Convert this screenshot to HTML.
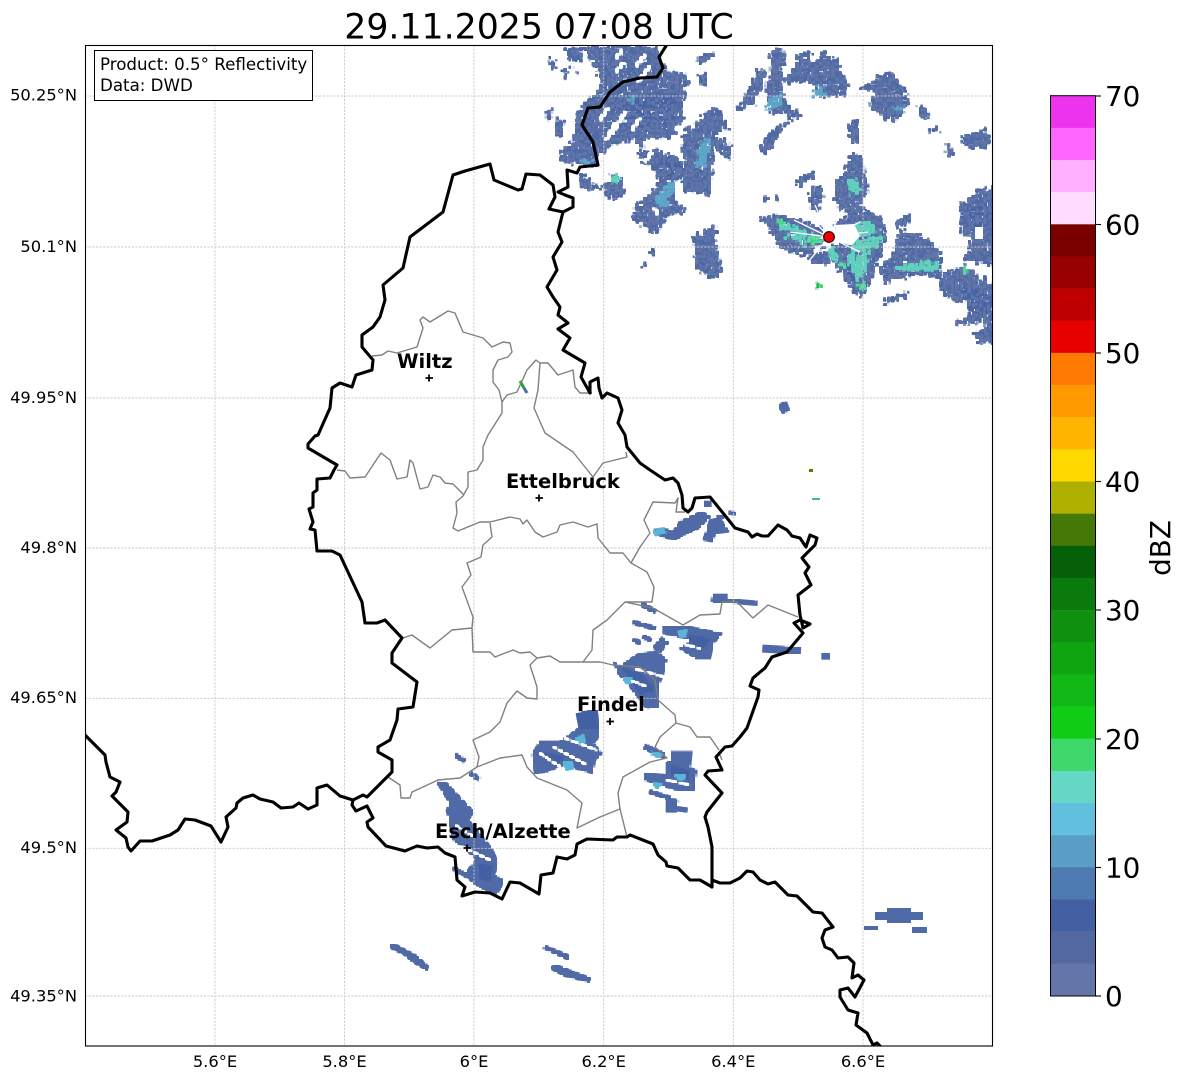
<!DOCTYPE html>
<html><head><meta charset="utf-8"><title>Radar</title>
<style>
html,body{margin:0;padding:0;background:#fff;width:1184px;height:1081px;overflow:hidden}
svg{display:block}
text{font-family:"DejaVu Sans","Liberation Sans",sans-serif;fill:#000}
.tl{font-size:16.3px}
.bx{font-size:16.67px}
.cb{font-size:27.8px}
.city{font-size:19.5px;font-weight:bold}
.grid line{stroke:#c8c8c8;stroke-width:.9;stroke-dasharray:2.2 1.4}
.b{fill:none;stroke:#000;stroke-width:3.1;stroke-linejoin:round;stroke-linecap:round}
.g{fill:none;stroke:#808080;stroke-width:1.4;stroke-linejoin:round}
.s line{stroke-linecap:butt}
</style></head><body>
<svg width="1184" height="1081" viewBox="0 0 1184 1081" xmlns="http://www.w3.org/2000/svg">
<defs>
<filter id="rough" filterUnits="userSpaceOnUse" x="-50" y="-50" width="1600" height="1100" color-interpolation-filters="sRGB">
<feTurbulence type="fractalNoise" baseFrequency=".07" numOctaves="3" seed="4" result="n"/>
<feDisplacementMap in="SourceGraphic" in2="n" scale="34" xChannelSelector="R" yChannelSelector="G" result="d"/>
<feTurbulence type="fractalNoise" baseFrequency=".1" numOctaves="2" seed="11" result="h"/>
<feColorMatrix in="h" type="matrix" values="0 0 0 0 0  0 0 0 0 0  0 0 0 0 0  14 0 0 0 -4.6" result="m"/>
<feComposite in="d" in2="m" operator="in" result="cut"/>
<feTurbulence type="fractalNoise" baseFrequency=".13" numOctaves="2" seed="23" result="c"/>
<feColorMatrix in="c" type="matrix" values="0 0 0 0 .38  0 0 0 0 .46  0 0 0 0 .66  0 16 0 0 -9" result="lt"/>
<feComposite in="lt" in2="cut" operator="atop"/>
</filter>
<filter id="px" filterUnits="userSpaceOnUse" x="0" y="0" width="1184" height="1081" color-interpolation-filters="sRGB">
<feFlood x="0" y="0" width="2" height="2" flood-color="#000"/>
<feComposite x="0" y="0" width="4" height="3"/>
<feTile result="t"/>
<feComposite in="SourceGraphic" in2="t" operator="in"/>
<feMorphology operator="dilate" radius="1"/>
</filter>
<filter id="px6" filterUnits="userSpaceOnUse" x="0" y="0" width="1184" height="1081" color-interpolation-filters="sRGB">
<feFlood x="0" y="0" width="4" height="2" flood-color="#000"/>
<feComposite x="0" y="0" width="6" height="3"/>
<feTile result="t"/>
<feComposite in="SourceGraphic" in2="t" operator="in"/>
<feMorphology operator="dilate" radius="1"/>
</filter>
<clipPath id="ax"><rect x="85.5" y="45.5" width="907" height="1000"/></clipPath>
</defs>
<rect width="1184" height="1081" fill="#fff"/>

<g clip-path="url(#ax)">
<!-- northern radar echoes -->
<g filter="url(#px)">
<g transform="translate(540 40) scale(.33333)" filter="url(#rough)">
<g fill="#4f69a5">
<polygon points="135,20 350,20 370,80 410,110 440,110 430,170 425,240 390,290 320,290 300,340 350,330 420,360 430,400 400,440 410,490 440,510 380,530 350,580 280,540 280,500 320,470 350,440 355,400 300,360 295,310 270,300 200,320 165,350 180,380 120,370 65,360 60,340 100,300 115,210 160,170 190,130 170,90"/>
<polygon points="430,280 470,250 510,205 540,210 565,260 540,270 520,290 550,300 580,330 570,355 520,320 510,460 440,455 420,430 445,380 430,340"/>
<polygon points="195,445 215,405 245,415 248,470 200,475"/>
<polygon points="120,400 160,430 185,440 160,450 125,445"/>
<polygon points="25,55 50,70 40,90 28,75"/><polygon points="72,85 85,88 80,115 72,110"/><polygon points="105,88 120,90 118,102 105,100"/>
<polygon points="75,30 130,20 125,60 85,60"/>
<polygon points="20,205 35,210 35,235 22,235"/><polygon points="50,240 70,238 68,290 50,292"/><polygon points="465,60 520,35 515,50 480,68"/><polygon points="480,110 500,100 498,130 480,135"/>
<polygon points="380,100 440,100 445,130 400,170 375,150"/>
<polygon points="460,590 525,555 530,650 550,690 510,715 465,680"/>
<polygon points="330,630 348,630 348,648 330,648"/><polygon points="310,665 322,660 322,680 310,680"/>
<polygon points="595,205 660,85 680,100 640,190 605,210"/>
<polygon points="690,40 730,20 725,120 760,100 770,50 810,30 800,100 850,40 890,60 920,130 915,165 830,170 810,120 740,125 720,160 750,200 785,225 755,245 735,215 690,220 680,135 695,100"/>
<polygon points="655,320 690,280 740,240 730,260 680,340"/>
<polygon points="955,155 1030,100 1065,100 1105,170 1095,210 1060,245 990,200 1010,150"/>
<polygon points="1130,200 1160,210 1160,235 1135,228"/><polygon points="1170,270 1190,258 1192,272 1175,280"/><polygon points="1220,310 1240,325 1238,345 1222,345"/>
<polygon points="1260,295 1330,270 1350,290 1345,320 1290,325"/>
<polygon points="925,250 950,240 960,310 930,300"/>
<polygon points="885,440 940,335 965,360 985,460 930,520 890,500"/>
<polygon points="805,470 830,435 855,460 830,510 810,510"/><polygon points="770,420 820,395 820,415 780,440"/>
<polygon points="880,555 960,500 1020,530 1040,590 1000,700 970,770 945,760 900,690 860,640 880,620 930,600 900,570"/>
<polygon points="660,535 720,525 790,545 850,570 850,600 800,640 760,640 720,620 690,560"/>
<polygon points="810,650 850,625 870,670 810,670"/>
<polygon points="1020,690 1060,640 1080,570 1150,590 1200,640 1200,700 1270,680 1365,740 1365,850 1250,850 1310,810 1220,770 1190,710 1120,700 1040,730 1030,710"/>
<polygon points="1265,490 1325,450 1370,435 1370,680 1270,660 1300,600 1260,570"/>
<polygon points="1305,880 1365,840 1365,910 1320,910"/>
<polygon points="1060,555 1110,520 1115,540 1080,560"/>
<polygon points="1030,785 1100,755 1100,770 1040,790"/>
<polygon points="670,470 683,470 683,480 670,480"/><polygon points="705,470 716,470 716,482 705,482"/>
</g>
<g fill="#4663a6">
<polygon points="220,170 400,170 400,260 330,280 240,250"/>
<polygon points="900,640 960,640 990,700 960,760 920,720"/>
<polygon points="1230,720 1360,760 1360,840 1280,800"/>
<polygon points="1280,500 1350,480 1350,560 1290,560"/>
<polygon points="360,350 420,370 420,410 370,410"/>
</g>
<g fill="#5aa6c8">
<polygon points="470,340 495,295 510,300 495,370 472,380"/>
<polygon points="350,470 395,425 410,430 378,505 352,490"/>
<polygon points="680,210 700,170 720,170 725,195"/>
<polygon points="125,365 150,355 150,375"/>
<polygon points="815,150 850,140 850,165 820,170"/>
<polygon points="1060,205 1095,195 1090,212"/>
<polygon points="260,175 285,170 285,185"/>
</g>
<g fill="#5cd2bd">
<polygon points="945,555 1000,545 1030,595 985,645 970,715 950,715 925,670 935,620"/>
<polygon points="715,550 785,565 830,590 795,615 750,605"/>
<polygon points="1060,678 1185,665 1190,690 1070,692"/>
<polygon points="925,420 950,420 958,455 932,465"/>
<polygon points="862,630 885,630 895,660 880,660"/>
<polygon points="210,410 240,410 240,430 212,430"/>
</g>
<g fill="#3fd96b">
<polygon points="805,590 840,585 840,605 810,610"/><polygon points="700,540 740,545 735,555"/><polygon points="935,555 950,550 948,570 936,572"/>
<polygon points="900,665 915,665 915,680 900,685"/><polygon points="958,730 975,730 975,748 958,748"/><polygon points="210,408 222,408 222,420 210,420"/>
<polygon points="830,730 838,730 838,745 830,745"/><polygon points="1270,680 1282,680 1282,700 1270,700"/>
</g>
<g fill="#4f69a5">
<polygon points="950,590 1030,575 1030,585 950,602"/><polygon points="940,640 1000,620 1000,632 945,652"/><polygon points="740,590 820,600 820,612 745,604"/><polygon points="720,565 770,575 770,585 725,577"/>
</g>
</g>
<!-- gaps inside the main echo -->
<g stroke="#fff" fill="none" stroke-width="3">
<line x1="622" y1="50" x2="616" y2="58"/><line x1="645" y1="55" x2="636" y2="66"/><line x1="650" y1="66" x2="638" y2="82"/><line x1="624" y1="62" x2="616" y2="72"/><line x1="608" y1="108" x2="600" y2="120"/><line x1="625" y1="112" x2="612" y2="134"/><line x1="616" y1="122" x2="606" y2="140"/><line x1="640" y1="118" x2="632" y2="130"/><line x1="596" y1="68" x2="590" y2="78"/><line x1="652" y1="152" x2="645" y2="162"/><line x1="654" y1="208" x2="658" y2="214"/>
</g>
<polygon points="975,227 984,227 984,238 975,238" fill="#fff"/>
</g>
<g stroke="#fff" fill="none" stroke-width="1.3">
<line x1="829" y1="237" x2="802" y2="208"/><line x1="829" y1="237" x2="815" y2="205"/><line x1="829" y1="237" x2="842" y2="210"/><line x1="829" y1="237" x2="860" y2="222"/><line x1="829" y1="237" x2="868" y2="232"/><line x1="829" y1="237" x2="860" y2="252"/><line x1="829" y1="237" x2="808" y2="262"/><line x1="829" y1="237" x2="790" y2="232"/><line x1="829" y1="237" x2="794" y2="220"/>
</g>
<polygon points="835,225 854,224 860,236 852,245 836,242" fill="#fff"/>

<!-- southern streak echoes -->
<g filter="url(#px6)">
<g transform="translate(380 590) scale(.33333)">
<g fill="#5069a7">
<polygon points="700,215 720,230 755,205 780,190 830,185 860,210 850,250 835,290 840,350 800,355 750,290 715,250"/>
<polygon points="850,110 925,110 1025,130 1000,160 990,205 950,205 900,175 940,150 850,130"/>
<polygon points="590,370 650,360 660,435 640,460 665,490 645,510 640,550 550,525 500,545 465,550 455,495 480,455 540,455 590,420 610,400"/>
<polygon points="875,485 935,485 930,535 950,540 945,600 890,600 795,570 795,550 860,555 860,520 875,510"/>
<polygon points="860,625 895,630 890,665 860,665"/>
<polygon points="170,575 200,580 280,665 265,690 335,775 355,820 340,860 370,875 355,905 345,915 280,880 255,850 290,810 250,770 220,750 200,660 210,640"/>
</g>
<g fill="#4360a3">
<polygon points="590,370 650,360 655,420 600,420"/><polygon points="720,230 790,250 830,300 780,320"/>
<polygon points="290,820 345,825 330,880 300,870"/><polygon points="870,520 930,540 925,575 870,555"/><polygon points="930,130 1000,145 970,180 930,160"/><polygon points="490,480 560,500 540,520 490,510"/>
</g>
<g stroke="#5069a7" fill="none" class="s">
<line x1="785" y1="42" x2="825" y2="65" stroke-width="11"/>
<line x1="760" y1="97" x2="825" y2="115" stroke-width="10"/>
<line x1="760" y1="150" x2="780" y2="158" stroke-width="10"/>
<line x1="790" y1="140" x2="812" y2="150" stroke-width="10"/>
<line x1="830" y1="180" x2="855" y2="150" stroke-width="25"/>
<line x1="995" y1="28" x2="1130" y2="40" stroke-width="10"/>
<line x1="1000" y1="25" x2="1040" y2="25" stroke-width="22"/>
<line x1="1150" y1="176" x2="1260" y2="182" stroke-width="18"/>
<line x1="795" y1="470" x2="855" y2="498" stroke-width="14"/>
<line x1="810" y1="605" x2="870" y2="625" stroke-width="10"/>
<line x1="890" y1="656" x2="920" y2="660" stroke-width="10"/>
<line x1="225" y1="495" x2="253" y2="513" stroke-width="10"/>
<line x1="272" y1="550" x2="298" y2="568" stroke-width="10"/>
<line x1="220" y1="835" x2="265" y2="860" stroke-width="10"/>
<line x1="340" y1="860" x2="368" y2="876" stroke-width="10"/>
</g>
<rect x="1327" y="192" width="20" height="14" fill="#5069a7"/>
<g stroke="#fff" stroke-width="3" fill="none">
<line x1="480" y1="490" x2="540" y2="530"/><line x1="520" y1="470" x2="620" y2="525"/><line x1="555" y1="445" x2="650" y2="480"/><line x1="750" y1="270" x2="800" y2="290"/><line x1="760" y1="235" x2="850" y2="260"/><line x1="860" y1="570" x2="930" y2="585"/><line x1="225" y1="705" x2="280" y2="740"/><line x1="900" y1="160" x2="960" y2="175"/><line x1="245" y1="770" x2="330" y2="810"/>
</g>
<g fill="#5ab6d8">
<polygon points="585,445 610,435 615,455 595,462"/><polygon points="550,515 575,515 580,535 560,540"/><polygon points="730,262 755,262 755,280 740,280"/><polygon points="815,485 845,492 840,503 815,495"/><polygon points="815,578 845,582 835,598"/><polygon points="885,555 915,555 912,572 890,570"/><polygon points="895,125 920,120 915,140 900,140"/>
</g>
</g>
<!-- north-east band by Ettelbruck -->
<g transform="translate(640 470) scale(.33333)">
<polygon fill="#5069a7" points="40,180 70,175 100,185 120,155 185,125 210,140 175,175 130,195 105,210 65,200"/>
<polygon fill="#5069a7" points="190,210 210,150 240,145 265,185 225,190 220,215"/>
<polygon fill="#5069a7" points="195,95 212,95 212,108 195,108"/><polygon fill="#5069a7" points="268,124 285,126 285,134 268,132"/><polygon fill="#5069a7" points="232,135 250,135 250,145 232,145"/>
<polygon fill="#5ab6d8" points="38,182 68,176 80,188 48,196"/>
</g>
<!-- isolated echoes -->
<g fill="#5069a7">
<polygon points="778,405 786,402 789,410 783,413"/>
<polygon points="391,945 394,944 415,955 428,966 427,970 413,962 405,955 391,948"/>
<polygon points="543,948 546,946 570,956 569,960"/>
<polygon points="550,968 556,965 590,978 589,982 565,976"/>
<rect x="876" y="913" width="48" height="6"/><rect x="888" y="909" width="24" height="13"/><rect x="865" y="926" width="12" height="3"/><rect x="913" y="928" width="13" height="5"/>
</g>
</g>
<line x1="520" y1="381" x2="524" y2="388" stroke="#22a52a" stroke-width="3"/>
<line x1="524" y1="388" x2="527" y2="393" stroke="#4f6aa8" stroke-width="3"/>
<rect x="809" y="469" width="4" height="3" fill="#5f7a10"/>
<rect x="812" y="498" width="8" height="2" fill="#3fbf88"/>
<rect x="817" y="283" width="2.5" height="5" fill="#20c040"/>

<!-- gridlines -->
<g class="grid">
<line x1="215" y1="45" x2="215" y2="1046"/><line x1="344.5" y1="45" x2="344.5" y2="1046"/><line x1="474" y1="45" x2="474" y2="1046"/><line x1="603.7" y1="45" x2="603.7" y2="1046"/><line x1="733.3" y1="45" x2="733.3" y2="1046"/><line x1="863" y1="45" x2="863" y2="1046"/>
<line x1="85" y1="96" x2="993" y2="96"/><line x1="85" y1="247" x2="993" y2="247"/><line x1="85" y1="398" x2="993" y2="398"/><line x1="85" y1="548" x2="993" y2="548"/><line x1="85" y1="698.3" x2="993" y2="698.3"/><line x1="85" y1="848.3" x2="993" y2="848.3"/><line x1="85" y1="996" x2="993" y2="996"/>
</g>

<!-- internal boundaries -->
<g class="g">
<polyline points="372,356 382,355 388,351 397,353 417,347 423,328 420,320 423,317 430,322 448,311 455,313 463,332 483,338 492,347 503,342 510,343 512,352 508,357 498,360 493,370 493,382 499,390 502,402 502,413 488,435 483,447 483,460 477,470 468,472 468,487 463,496 456,502 457,513 453,528 458,531 480,522 490,522 510,517 520,519 523,524 527,520 535,532 543,537 557,532 560,525 573,522 588,527 597,524 598,538 610,553 623,553 631,563 647,572 654,587 652,602 625,602 607,620 593,630 592,650 583,662"/>
<polyline points="502,402 507,395 517,392 527,370 536,360 540,363 538,390 534,408 545,433 573,452 593,477 603,463 627,457 626,452"/>
<polyline points="540,363 548,363 558,375 573,370 575,387 580,393 592,393"/>
<polyline points="337,470 345,471 350,478 365,477 381,453 390,460 397,479 407,477 410,460 413,463 420,489 428,487 433,475 440,477 445,483 453,484 464,495"/>
<polyline points="490,523 492,537 483,545 481,557 467,563 471,575 462,587 473,617 472,628 452,630 430,648 412,635 403,638"/>
<polyline points="472,628 473,652 490,652 495,657 513,650 520,653 530,652 537,658 550,656 560,662 583,662 600,662 613,665 640,667 655,680 658,700 675,715 676,723 690,727 697,737 710,737 719,750"/>
<polyline points="537,658 530,665 537,687 537,699 527,698 517,691 507,703 500,722 490,732 473,740 479,757 477,767 500,758 522,755 527,767 537,778 567,790 582,803 577,828 600,817 620,809 627,837"/>
<polyline points="477,767 460,778 438,780 423,787 412,792 410,798 401,798 400,785 388,777"/>
<polyline points="676,723 660,737 655,747 667,758 650,762 623,777 618,793 620,809"/>
<polyline points="625,602 653,608 683,625 700,615 720,614 722,602 737,602 753,618 768,605 798,617"/>
<polyline points="631,563 640,547 650,533 644,520 653,502 675,503 678,498 676,512 685,512"/>
<polyline points="715,757 720,755 722,760"/>
</g>

<!-- black borders -->
<polyline class="b" points="85,735 105,755 106,762 110,777 120,782 116,792 112,796 128,812 127,822 116,830 126,838 128,847 131,851 140,841 152,841 170,835 178,830 185,819 195,820 211,826 221,842 228,827 226,817 236,808 237,803 243,798 253,795 260,799 273,802 281,808 293,807 299,803 308,809 317,805 317,788 327,785 340,796 353,800 352,805 356,811 367,806 373,818 367,822 368,827 386,846 405,851 417,846 427,848 438,847 445,853 455,857 457,880 465,887 462,896 475,892 490,893 502,899 510,882 520,883 539,894 541,875 553,873 557,857 567,859 575,855 577,844 587,839 613,840 617,837 627,837 630,835 653,844 658,855 666,862 667,866 678,868 690,880 700,880 712,887 712,880 720,883 730,883 740,878 747,871 753,872 760,880 768,884 775,882 788,895 797,896 813,912 822,913 833,927 825,930 822,938 825,947 832,950 838,958 848,957 854,963 852,978 858,975 864,980 855,997 848,988 840,990 840,997 848,1010 858,1013 856,1025 867,1033 873,1045 877,1043 881,1047"/>
<polyline class="b" points="353,800 363,795 367,797 392,772 392,760 378,752 378,747 390,740 397,720 398,709 413,707 417,682 392,663 392,653 402,638 385,620 377,623 365,623 362,602 340,555 332,551 317,551 315,530 310,529 313,522 309,509 313,507 313,493 317,490 317,479 330,478 334,470 337,465 308,448 308,444 315,436 318,435 330,408 332,388 340,383 352,387 356,375 372,370 373,360 362,347 362,335 373,327 380,317 385,300 383,285 403,268 410,237 443,212 453,175 465,171 490,164 494,180 518,190 522,189 526,174 540,175 553,185 555,197 549,209 563,212 573,207 573,198 565,195 558,192 568,187 567,170 577,173 580,167 598,165 593,142 582,125 588,108 600,107 610,92 623,82 640,78 657,77 663,68 659,57 666,46"/>
<polyline class="b" points="712,887 712,847 708,827 705,817 707,812 722,793 705,775 708,771 722,770 716,757 725,747 732,746 740,737 747,728 758,697 759,690 750,686 753,678 765,668 772,657 787,652 803,633 794,623 800,620 810,624 803,628 800,615 798,595 811,585 805,573 809,567 802,558 815,545 817,538 810,535 806,547 800,538 792,536 787,530 778,525 768,536 762,536 757,534 752,537 748,532 735,528 723,513 710,497 695,498 692,508 688,512 683,508 682,495 678,483 673,478 665,480 650,470 640,463 627,447 625,435 618,423 622,410 618,398 607,393 602,398 599,388 598,378 590,382 590,393 581,377 585,363 563,350 570,338 558,329 568,323 558,315 560,307 553,297 547,287 557,270 553,257 562,242 558,232 563,212"/>

<!-- radar site -->
<circle cx="829" cy="237" r="5.4" fill="#f00000" stroke="#000" stroke-width="1"/>

<!-- city markers -->
<g stroke="#000" stroke-width="1.8" fill="none">
<path d="M425.5 378H433M429 374.5V381.5"/>
<path d="M535.5 498H543M539 494.5V501.5"/>
<path d="M606.5 721.5H614M610 718V725"/>
<path d="M463.5 848H471M467 844.5V851.5"/>
</g>
<text class="city" x="397" y="368">Wiltz</text>
<text class="city" x="506" y="488">Ettelbruck</text>
<text class="city" x="577" y="711">Findel</text>
<text class="city" x="435" y="838">Esch/Alzette</text>
</g>

<!-- info box -->
<rect x="94.5" y="50.5" width="218" height="50" fill="#fff" stroke="#000" stroke-width="1"/>
<text class="bx" x="100" y="70">Product: 0.5° Reflectivity</text>
<text class="bx" x="100" y="91">Data: DWD</text>

<!-- axes frame -->
<rect x="85.5" y="45.5" width="907" height="1000.5" fill="none" stroke="#000" stroke-width="1.1"/>

<!-- title -->
<text x="539" y="38.5" font-size="34.7" text-anchor="middle">29.11.2025 07:08 UTC</text>

<!-- tick labels -->
<g class="tl" text-anchor="end">
<text x="77" y="100.5">50.25°N</text>
<text x="77" y="252">50.1°N</text>
<text x="77" y="403">49.95°N</text>
<text x="77" y="553">49.8°N</text>
<text x="77" y="703">49.65°N</text>
<text x="77" y="853">49.5°N</text>
<text x="77" y="1001.5">49.35°N</text>
</g>
<g class="tl" text-anchor="middle">
<text x="215" y="1067">5.6°E</text>
<text x="344.5" y="1067">5.8°E</text>
<text x="474" y="1067">6°E</text>
<text x="603.7" y="1067">6.2°E</text>
<text x="733.3" y="1067">6.4°E</text>
<text x="863" y="1067">6.6°E</text>
</g>

<!-- colourbar -->
<g>
<rect x="1050.5" y="95.7" width="45" height="32.4" fill="#ee33ee"/>
<rect x="1050.5" y="127.85" width="45" height="32.4" fill="#ff66ff"/>
<rect x="1050.5" y="160" width="45" height="32.4" fill="#ffb0ff"/>
<rect x="1050.5" y="192.15" width="45" height="32.4" fill="#ffdcff"/>
<rect x="1050.5" y="224.3" width="45" height="32.4" fill="#7a0000"/>
<rect x="1050.5" y="256.45" width="45" height="32.4" fill="#990000"/>
<rect x="1050.5" y="288.6" width="45" height="32.4" fill="#bf0000"/>
<rect x="1050.5" y="320.75" width="45" height="32.4" fill="#e60000"/>
<rect x="1050.5" y="352.9" width="45" height="32.4" fill="#ff7a00"/>
<rect x="1050.5" y="385.05" width="45" height="32.4" fill="#ff9900"/>
<rect x="1050.5" y="417.2" width="45" height="32.4" fill="#ffb500"/>
<rect x="1050.5" y="449.35" width="45" height="32.4" fill="#ffd800"/>
<rect x="1050.5" y="481.5" width="45" height="32.4" fill="#aeb000"/>
<rect x="1050.5" y="513.65" width="45" height="32.4" fill="#467808"/>
<rect x="1050.5" y="545.8" width="45" height="32.4" fill="#065f09"/>
<rect x="1050.5" y="577.95" width="45" height="32.4" fill="#0b7a0c"/>
<rect x="1050.5" y="610.1" width="45" height="32.4" fill="#0f900f"/>
<rect x="1050.5" y="642.25" width="45" height="32.4" fill="#0fa511"/>
<rect x="1050.5" y="674.4" width="45" height="32.4" fill="#10b816"/>
<rect x="1050.5" y="706.55" width="45" height="32.4" fill="#10cc14"/>
<rect x="1050.5" y="738.7" width="45" height="32.4" fill="#3fd96b"/>
<rect x="1050.5" y="770.85" width="45" height="32.4" fill="#64d8c4"/>
<rect x="1050.5" y="803" width="45" height="32.4" fill="#62c0de"/>
<rect x="1050.5" y="835.15" width="45" height="32.4" fill="#5a9dc5"/>
<rect x="1050.5" y="867.3" width="45" height="32.4" fill="#4c7ab1"/>
<rect x="1050.5" y="899.45" width="45" height="32.4" fill="#4360a3"/>
<rect x="1050.5" y="931.6" width="45" height="32.4" fill="#52689f"/>
<rect x="1050.5" y="963.75" width="45" height="32.15" fill="#6476a9"/>
<rect x="1050.5" y="95.7" width="45" height="900.3" fill="none" stroke="#000" stroke-width="1"/>
</g>
<g stroke="#000" stroke-width="1.1">
<line x1="1095.5" y1="96" x2="1101" y2="96"/><line x1="1095.5" y1="224.5" x2="1101" y2="224.5"/><line x1="1095.5" y1="353" x2="1101" y2="353"/><line x1="1095.5" y1="481.5" x2="1101" y2="481.5"/><line x1="1095.5" y1="610" x2="1101" y2="610"/><line x1="1095.5" y1="739" x2="1101" y2="739"/><line x1="1095.5" y1="867.5" x2="1101" y2="867.5"/><line x1="1095.5" y1="996" x2="1101" y2="996"/>
</g>
<g class="cb">
<text x="1105" y="106">70</text>
<text x="1105" y="234.5">60</text>
<text x="1105" y="363">50</text>
<text x="1105" y="491.5">40</text>
<text x="1105" y="620">30</text>
<text x="1105" y="749">20</text>
<text x="1105" y="877.5">10</text>
<text x="1105" y="1006">0</text>
</g>
<text x="0" y="0" font-size="27.8" text-anchor="middle" transform="translate(1170 548) rotate(-90)">dBZ</text>
</svg>
</body></html>
